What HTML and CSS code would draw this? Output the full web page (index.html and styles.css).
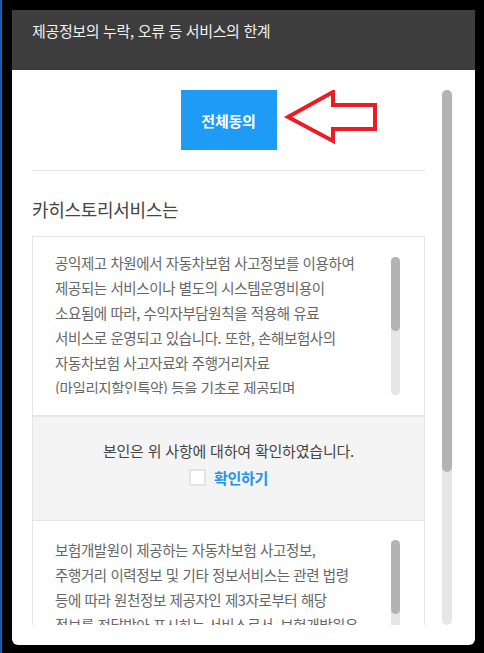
FILE: index.html
```html
<!DOCTYPE html>
<html lang="ko">
  <head>
    <meta charset="UTF-8" />
    <meta name="viewport" content="width=device-width, initial-scale=1.0" />
    <title>카히스토리 - 약관동의</title>
    <link rel="stylesheet" href="styles.css">
  </head>
  <body>
    <div class="modal">
      <header class="modal-header">
        <h1>제공정보의 누락, 오류 등 서비스의 한계</h1>
      </header>

      <div class="modal-body">
        <div class="scroll-content">
          <div class="agree-all">
            <div class="agree-wrap">
              <button class="agree-btn">전체동의</button>
              <svg class="point-arrow" width="98" height="58" viewBox="0 0 98 58">
                <polygon points="5,29 50,4 50,17 92,17 92,41 50,41 50,53" fill="#fff" stroke="#ec1c24" stroke-width="4" stroke-linejoin="miter" />
              </svg>
            </div>
          </div>

          <h2 class="terms-title">카히스토리서비스는</h2>

          <section class="terms-box first">
            <div class="terms-view">
              <p>
                공익제고 차원에서 자동차보험 사고정보를 이용하여<br>
                제공되는 서비스이나 별도의 시스템운영비용이<br>
                소요됨에 따라, 수익자부담원칙을 적용해 유료<br>
                서비스로 운영되고 있습니다. 또한, 손해보험사의<br>
                자동차보험 사고자료와 주행거리자료<br>
                (마일리지할인특약) 등을 기초로 제공되며<br>
                정보의 정확성을 보장하지 않습니다.
              </p>
            </div>
            <div class="mini-scroll"><div class="mini-thumb"></div></div>
          </section>

          <div class="confirm-area">
            <p>본인은 위 사항에 대하여 확인하였습니다.</p>
            <label class="confirm-check">
              <span class="check-box"></span>
              <span class="check-label">확인하기</span>
            </label>
          </div>

          <section class="terms-box">
            <div class="terms-view">
              <p>
                보험개발원이 제공하는 자동차보험 사고정보,<br>
                주행거리 이력정보 및 기타 정보서비스는 관련 법령<br>
                등에 따라 원천정보 제공자인 제3자로부터 해당<br>
                정보를 전달받아 표시하는 서비스로서, 보험개발원은<br>
                정보의 누락, 오류 등에 대해 책임지지 않습니다.
              </p>
            </div>
            <div class="mini-scroll"><div class="mini-thumb"></div></div>
          </section>
        </div>

        <div class="page-scroll"><div class="page-thumb"></div></div>
      </div>
    </div>
  </body>
</html>
```

FILE: styles.css
```css
/* Agreement modal */
body {
  font-family: "Noto Sans CJK KR", "Noto Sans", sans-serif;
  margin: 0;
  padding: 10px 0 0 10px;
  background-color: #000;
  border-left: 2px solid #0b63b8;
  height: 653px;
  box-sizing: border-box;
  overflow: hidden;
  color: #444;
}

.modal {
  width: 463px;
  height: 635px;
  background: #fff;
  border-radius: 0 0 6px 6px;
  overflow: hidden;
}

.modal-header {
  height: 60px;
  background-color: #3d3d3d;
  padding: 10px 20px 0;
  box-sizing: border-box;
}

.modal-header h1 {
  margin: 0;
  font-size: 15px;
  font-weight: normal;
  line-height: 22px;
  letter-spacing: -0.35px;
  color: #f2f2f2;
}

.modal-body {
  display: flex;
  gap: 17px;
  padding: 20px 23px 20px 20px;
}

.scroll-content {
  flex: 1;
  height: 535px;
  overflow: hidden;
}

.agree-all {
  display: flex;
  justify-content: center;
  padding-bottom: 20px;
  border-bottom: 1px solid #e6e6e6;
}

.agree-wrap {
  position: relative;
}

.agree-btn {
  display: block;
  width: 96px;
  height: 60px;
  border: none;
  background: #1e9bf5;
  color: #fff;
  font-family: inherit;
  font-size: 15px;
  font-weight: bold;
  letter-spacing: -0.2px;
  cursor: pointer;
}

.point-arrow {
  position: absolute;
  left: calc(100% + 6px);
  top: -2px;
}

.terms-title {
  margin: 26px 0 15px;
  font-size: 18px;
  font-weight: normal;
  line-height: 24px;
  letter-spacing: -0.3px;
  color: #444;
}

.terms-box {
  display: flex;
  gap: 10px;
  border: 1px solid #e6e6e6;
  padding: 16px 24px 19px 22px;
}

.terms-box.first {
  padding-top: 13px;
  padding-bottom: 20px;
}

.terms-view {
  flex: 1;
  height: 144px;
  overflow: hidden;
}

.terms-view p {
  margin: 0;
  font-size: 14.5px;
  line-height: 25px;
  letter-spacing: -0.4px;
  color: #666;
  white-space: nowrap;
}

.mini-scroll {
  width: 9px;
  height: 138px;
  margin-top: 3px;
  background: #e6e6e6;
  border-radius: 5px;
}

.terms-box.first .mini-scroll {
  margin-top: 7px;
}

.mini-thumb {
  height: 74px;
  background: #b3b3b3;
  border-radius: 5px;
}

.confirm-area {
  background: #f4f4f4;
  border: 1px solid #e6e6e6;
  border-bottom: none;
  padding: 24px 0 29px;
  text-align: center;
}

.confirm-area p {
  margin: 0 0 6px;
  font-size: 15px;
  line-height: 20px;
  letter-spacing: -0.2px;
  color: #444;
}

.confirm-check {
  display: inline-flex;
  align-items: center;
  gap: 8px;
  cursor: pointer;
}

.check-box {
  width: 13px;
  height: 13px;
  background: #fff;
  border: 2px solid #e4e4e4;
}

.check-label {
  font-size: 15px;
  font-weight: bold;
  line-height: 17px;
  letter-spacing: -0.3px;
  color: #1e96f0;
}

.page-scroll {
  width: 10px;
  height: 535px;
  background: #e6e6e6;
  border-radius: 5px;
}

.page-thumb {
  height: 382px;
  background: #b3b3b3;
  border-radius: 5px;
}
```
